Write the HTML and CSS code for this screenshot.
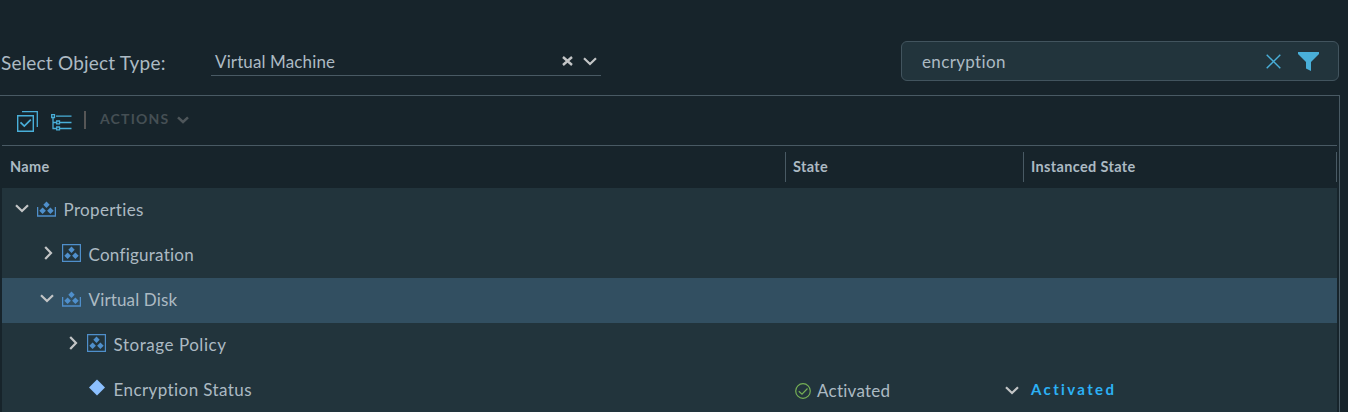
FILE: index.html
```html
<!DOCTYPE html>
<html lang="en">
<head>
<meta charset="utf-8">
<title>Select Object Type</title>
<link rel="stylesheet" href="styles.css">
</head>
<body>
<svg class="defs" aria-hidden="true">
  <symbol id="down" viewBox="0 0 14 9"><path d="M1 1.200 7 7l6-5.800" fill="none" stroke="currentColor" stroke-width="2.200"/></symbol>
  <symbol id="right" viewBox="0 0 9 14"><path d="M1.200 1 7 7l-5.800 6" fill="none" stroke="currentColor" stroke-width="2.200"/></symbol>
  <symbol id="dots" viewBox="0 0 19 18"><path d="M9.500 2.500l3.200 3.200-3.200 3.200-3.200-3.200zM5.600 8.500l3.300 3.300-3.300 3.300-3.300-3.300zM13.400 8.500l3.300 3.300-3.300 3.300-3.300-3.300z" fill="currentColor"/></symbol>
  <symbol id="group" viewBox="0 0 19 18"><use href="#dots"/><path d="M.5.5h18v17H.5z" fill="none" stroke="currentColor" stroke-width="1.400"/></symbol>
  <symbol id="open-group" viewBox="0 0 19 18"><use href="#dots"/><path d="M.6 8v9h17.800V8" fill="none" stroke="currentColor" stroke-width="1.300"/></symbol>
</svg>
<header class="filters">
  <label class="filter-label">Select Object Type:</label>
  <div class="select">
    <span class="select-value">Virtual Machine</span>
    <svg class="clear" viewBox="0 0 11 10"><path d="M1 1l9 8M10 1 1 9" stroke="currentColor" stroke-width="2.400"/></svg>
    <svg class="select-arrow"><use href="#down"/></svg>
  </div>
  <div class="search">
    <span class="search-value">encryption</span>
    <svg class="search-clear" viewBox="0 0 15 15"><path d="M.7.7l13.600 13.600M14.300.7.7 14.300" stroke="currentColor" stroke-width="1.400"/></svg>
    <svg class="funnel" viewBox="0 0 21 19"><path d="M0 0h21v2l-8 8v9l-5-2.500V10L0 2z" fill="currentColor"/></svg>
  </div>
</header>
<main class="panel">
  <div class="toolbar">
    <svg class="select-all" viewBox="0 0 21 21" fill="none" stroke="currentColor"><path d="M.7 4.700h15.600v15.600H.7z" stroke-width="1.400"/><path d="M5 .7h15.300V16" stroke-width="1.300"/><path d="M3.500 11.300l3.800 3.800 6.500-6.500" stroke-width="1.700"/></svg>
    <svg class="tree" viewBox="0 0 21 17" fill="none" stroke="currentColor" stroke-width="1.300"><path d="M.7.7h2.800v2.800H.7zM5.700 7h2.800v2.800H5.700zM5.700 13h2.800v2.800H5.700zM2 4v10.500h3.500M2 8.500h3.500M5 2.200h15.500M9 8.500h11.500M9 14.500h11.500"/></svg>
    <span class="separator"></span>
    <span class="actions">ACTIONS</span>
    <svg class="actions-arrow" viewBox="0 0 12 8"><path d="M1 1.300 6 6l5-4.700" fill="none" stroke="currentColor" stroke-width="2.500"/></svg>
  </div>
  <div class="grid">
    <div class="row head">
      <div class="cell"><span>Name</span></div>
      <div class="cell"><span>State</span></div>
      <div class="cell"><span>Instanced State</span></div>
    </div>
    <div class="row">
      <div class="name level-0"><svg class="down"><use href="#down"/></svg><svg class="object"><use href="#open-group"/></svg><span class="t-prop">Properties</span></div>
    </div>
    <div class="row">
      <div class="name level-1"><svg class="right"><use href="#right"/></svg><svg class="object"><use href="#group"/></svg><span class="t-conf">Configuration</span></div>
    </div>
    <div class="row selected">
      <div class="name level-1"><svg class="down"><use href="#down"/></svg><svg class="object"><use href="#open-group"/></svg><span class="t-disk">Virtual Disk</span></div>
    </div>
    <div class="row">
      <div class="name level-2"><svg class="right"><use href="#right"/></svg><svg class="object"><use href="#group"/></svg><span class="t-policy">Storage Policy</span></div>
    </div>
    <div class="row">
      <div class="name level-2"><span class="right"></span><svg class="object leaf" viewBox="0 0 19 18"><path d="M10 .5l8 8-8 8-8-8z" fill="currentColor"/></svg><span class="t-enc">Encryption Status</span></div>
      <div class="state"><svg class="ok" viewBox="0 0 16 16" fill="none" stroke="currentColor" stroke-width="1.200"><circle cx="8" cy="8" r="7.300"/><path d="M3.800 8.200 7 11.200l5.500-5.700"/></svg><span class="t-act">Activated</span><svg class="down"><use href="#down"/></svg></div>
      <div class="instanced">Activated</div>
    </div>
  </div>
</main>
</body>
</html>
```
FILE: styles.css
```css
* { box-sizing: border-box; }
body {
  margin: 0;
  height: 412px;
  overflow: hidden;
  background: #17242b;
  color: #acbac3;
  font-family: Lato, "Open Sans", sans-serif;
  font-size: 17px;
  font-variant-ligatures: none;
  white-space: nowrap;
}
svg { display: block; flex: none; }
.defs { display: none; }
.filters { display: flex; height: 95px; padding-top: 41px; }
.filter-label { width: 211px; padding-left: 1px; font-size: 19px; line-height: 43px; letter-spacing: .2px; }
.select { display: flex; width: 390px; height: 35px; padding-left: 4px; border-bottom: 1px solid #495a64; line-height: 41px; }
.select-value { width: 347px; letter-spacing: .12px; }
.clear { width: 11px; height: 10px; margin-top: 15px; color: #c3c5c6; }
.select-arrow { width: 14px; height: 9px; margin: 16px 0 0 10px; color: #c3c5c6; }
.search { display: flex; align-items: center; width: 438px; height: 40px; margin-left: 300px; padding-left: 20px; background: #22343c; border: 1px solid #42545e; border-radius: 6px; }
.search-value { width: 344px; letter-spacing: .35px; }
.search-clear { width: 15px; height: 15px; color: #49afd9; }
.funnel { width: 21px; height: 19px; margin-left: 17px; color: #49afd9; }
.panel { width: 1340px; height: 317px; padding-left: 2px; border-top: 1px solid #495a64; border-right: 1px solid #495a64; }
.toolbar { display: flex; width: 1335px; height: 50px; padding-left: 15px; border-bottom: 1px solid #495a64; }
.select-all { width: 21px; height: 21px; margin-top: 15px; color: #49afd9; }
.tree { width: 21px; height: 17px; margin: 18px 0 0 13px; color: #49afd9; }
.separator { width: 2px; height: 18px; margin: 15px 0 0 12px; background: #565656; }
.actions { width: 77px; margin-left: 14px; color: #454f54; font-size: 14px; font-weight: 700; line-height: 46px; letter-spacing: 1.200px; }
.actions-arrow { width: 12px; height: 8px; margin-top: 20px; color: #4e565a; }
.grid { width: 1335px; }
.row { display: grid; grid-template-columns: 784px 238px 313px; height: 45px; background: #22343c; align-items: center; }
.row.head { height: 42px; background: none; font-size: 14.500px; font-weight: 700; letter-spacing: .35px; }
.row.selected { background: #324f61; }
.cell { height: 30px; padding-left: 7px; border-right: 1px solid #495a64; line-height: 29px; }
.cell:first-child { padding-left: 8px; }
.name, .state { display: flex; align-items: center; height: 45px; }
.name span:last-child { margin-left: 7.500px; height: 45px; line-height: 43px; }
.level-0 { padding-left: 13px; }
.level-1 { padding-left: 38px; }
.level-2 { padding-left: 63px; }
.down { width: 14px; height: 9px; margin: -4px 8px 0 0; color: #c3c5c6; }
.right { width: 9px; height: 14px; margin: -5px 9px 0 4px; color: #c3c5c6; }
.object { width: 19px; height: 18px; margin-top: -5px; color: #4f8fcb; }
.leaf { color: #8cc0ff; }
.state { padding-left: 9px; }
.ok { width: 16px; height: 16px; margin-top: 1px; color: #75af55; }
.t-prop { letter-spacing: .35px; }
.t-conf { letter-spacing: .25px; }
.t-disk { letter-spacing: .15px; }
.t-policy { letter-spacing: .54px; }
.t-enc { letter-spacing: .42px; }
.t-act { width: 188px; margin-left: 6px; letter-spacing: .25px; }
.state .down { margin: 0; }
.instanced { padding-left: 7px; line-height: 43px; height: 45px; color: #2cb1f5; font-size: 15px; font-weight: 700; letter-spacing: 2.350px; }
```
